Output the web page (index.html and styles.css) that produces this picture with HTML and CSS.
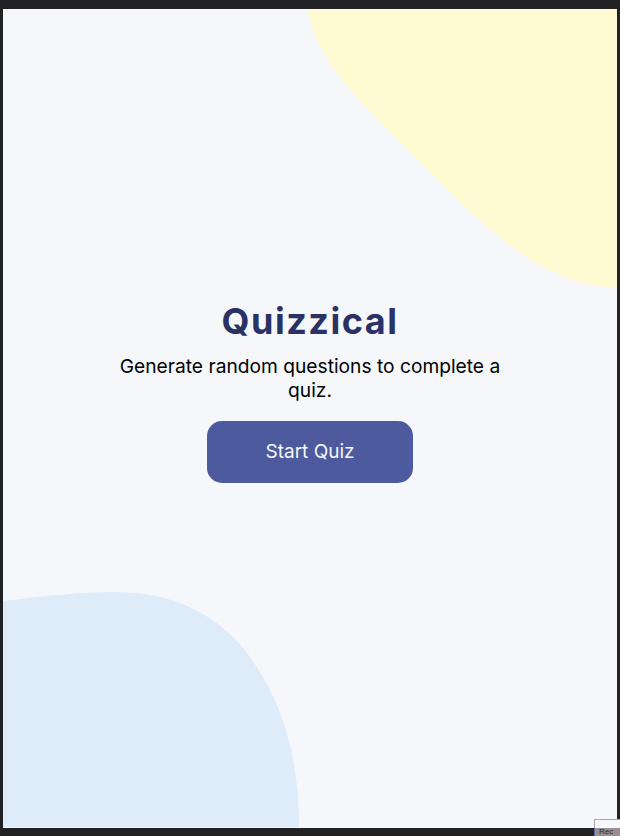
FILE: index.html
```html
<!DOCTYPE html>
<html lang="en">
<head>
<meta charset="utf-8">
<title>Quizzical</title>
<link rel="stylesheet" href="styles.css">
</head>
<body>
<main class="app">
  <svg class="blob blob-yellow" width="614" height="290" viewBox="0 0 614 290" aria-hidden="true">
    <path d="M304 0 C312 40 335 70 380 116 L450 186 C510 246 555 276 614 279 V0 Z" fill="#fffad1"/>
  </svg>
  <svg class="blob blob-blue" width="300" height="240" viewBox="0 580 300 240" aria-hidden="true">
    <path d="M0 593 C40 588 80 584 110 584 C170 584 210 605 240 640 C280 690 296 750 296 819 H0 Z" fill="#deebf8"/>
  </svg>
  <section class="intro">
    <h1 class="title">Quizzical</h1>
    <p class="subtitle">Generate random questions to complete a quiz.</p>
    <button class="start-btn" type="button">Start Quiz</button>
  </section>
</main>
<div class="corner-tip"><span class="corner-box"></span><span class="corner-text">Rec</span></div>
</body>
</html>
```

FILE: styles.css
```css
html, body {
  margin: 0;
  padding: 0;
}
body {
  background: #222224;
  padding: 9px 3px 8px 3px;
  font-family: Inter, "Noto Sans", sans-serif;
  position: relative;
  height: 836px;
  box-sizing: border-box;
  overflow: hidden;
}
.app {
  position: relative;
  height: 819px;
  background: #f5f7fb;
  overflow: hidden;
  display: flex;
  align-items: center;
  justify-content: center;
}
.blob {
  position: absolute;
  display: block;
}
.blob-yellow {
  top: 0;
  right: 0;
}
.blob-blue {
  left: 0;
  bottom: 0;
}
.intro {
  position: relative;
  display: flex;
  flex-direction: column;
  align-items: center;
  width: 400px;
  text-align: center;
  margin-bottom: 56px;
}
.title {
  margin: 0;
  font-size: 36px;
  font-weight: 700;
  letter-spacing: 1.5px;
  color: #293264;
  line-height: 44px;
}
.subtitle {
  margin: 11px 0 0 0;
  font-size: 19.2px;
  line-height: 24px;
  color: #000000;
}
.start-btn {
  margin-top: 19px;
  width: 206px;
  height: 62px;
  border: none;
  border-radius: 15px;
  background: #4d5b9e;
  color: #f5f7fb;
  font-family: Inter, "Noto Sans", sans-serif;
  font-size: 19px;
  cursor: pointer;
}
.corner-tip {
  position: absolute;
  left: 594px;
  top: 819px;
  width: 26px;
  display: flex;
  flex-direction: column;
}
.corner-box {
  display: block;
  height: 8px;
  background: #f5f7fb;
  border-left: 1px solid #a8a8a8;
  border-top: 1px solid #a8a8a8;
}
.corner-text {
  display: block;
  height: 8px;
  background: #9a8e8e;
  color: #2a2a2a;
  font-family: "Liberation Sans", sans-serif;
  font-size: 8px;
  line-height: 8px;
  padding-left: 4px;
  border-left: 1px solid #5a6ab0;
}
```
